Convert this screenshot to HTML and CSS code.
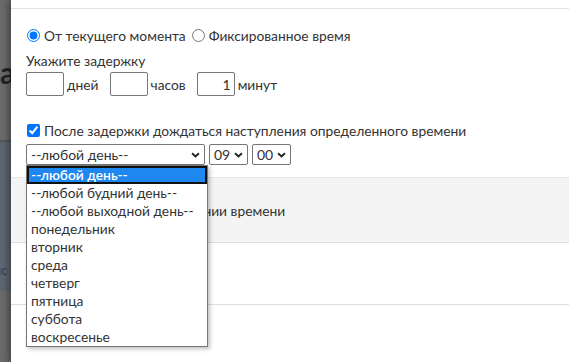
FILE: index.html
```html
<!DOCTYPE html>
<html lang="ru">
<head>
    <meta charset="UTF-8">
    <meta name="viewport" content="width=device-width, initial-scale=1.0">
    <title>Задержка</title>
    <link rel="stylesheet" href="styles.css">
</head>
<body>
    <div class="backdrop">
        <span class="bg-letter">а</span>
        <div class="bg-band"></div>
        <span class="bg-text">пс</span>
    </div>
    <div class="dialog">
        <div class="dialog-head"></div>
        <div class="dialog-body">
            <div class="mode-row">
                <label class="choice"><input type="radio" name="mode" checked> От текущего момента</label>
                <label class="choice"><input type="radio" name="mode"> Фиксированное время</label>
            </div>
            <div class="delay-label">Укажите задержку</div>
            <div class="delay-row">
                <input class="num" type="text" value=""><span class="unit">дней</span>
                <input class="num" type="text" value=""><span class="unit">часов</span>
                <input class="num" type="text" value="1"><span class="unit">минут</span>
            </div>
            <label class="choice wait-row"><input type="checkbox" checked> После задержки дождаться наступления определенного времени</label>
            <div class="time-row">
                <div class="select-wrap day">
                    <select class="select"><option>--любой день--</option></select>
                    <svg class="chevron" viewBox="0 0 10 7"><path d="M1 1.5 L5 5.3 L9 1.5" fill="none" stroke="#222" stroke-width="2.2"/></svg>
                </div>
                <div class="select-wrap small">
                    <select class="select"><option>09</option></select>
                    <svg class="chevron" viewBox="0 0 10 7"><path d="M1 1.5 L5 5.3 L9 1.5" fill="none" stroke="#222" stroke-width="2.2"/></svg>
                </div>
                <div class="select-wrap small">
                    <select class="select"><option>00</option></select>
                    <svg class="chevron" viewBox="0 0 10 7"><path d="M1 1.5 L5 5.3 L9 1.5" fill="none" stroke="#222" stroke-width="2.2"/></svg>
                </div>
                <ul class="dropdown">
                    <li class="active">--любой день--</li>
                    <li>--любой будний день--</li>
                    <li>--любой выходной день--</li>
                    <li>понедельник</li>
                    <li>вторник</li>
                    <li>среда</li>
                    <li>четверг</li>
                    <li>пятница</li>
                    <li>суббота</li>
                    <li>воскресенье</li>
                </ul>
            </div>
        </div>
        <div class="section gray">
            <span class="section-text">Выполнить при наступлении времени</span>
        </div>
        <div class="section"></div>
        <div class="section last"></div>
    </div>
</body>
</html>
```

FILE: styles.css
```css
body {
    margin: 0;
    font-family: Lato, "Noto Sans", sans-serif;
    font-size: 13.8px;
    color: #333;
    background: #666;
    display: flex;
    height: 362px;
    overflow: hidden;
}

.backdrop {
    width: 11px;
    flex-shrink: 0;
    position: relative;
    overflow: hidden;
    background: #6a6a6a;
}

.bg-letter {
    position: absolute;
    left: 0;
    top: 54px;
    font-size: 30px;
    font-weight: bold;
    color: #222;
}

.bg-band {
    position: absolute;
    left: 0;
    top: 140px;
    width: 11px;
    height: 150px;
    background: #5c6570;
    border-top: 1px solid #555;
    box-shadow: 0 25px 0 -24px #4c545e inset, 0 66px 0 -65px #4c545e inset;
}

.bg-text {
    position: absolute;
    left: -6px;
    top: 262px;
    font-size: 13px;
    color: #3a4048;
}

.dialog {
    flex: 1;
    background: #fff;
    box-shadow: -3px 0 6px rgba(0, 0, 0, 0.35);
    position: relative;
}

.dialog-head {
    height: 8px;
    border-bottom: 1px solid #e2e2e2;
}

.dialog-body {
    padding: 17px 0 0 15px;
    height: 151px;
}

.choice {
    display: inline-flex;
    align-items: center;
    gap: 4px;
    margin-right: 5px;
}

.choice input {
    margin: 0 0 0 1px;
    width: 13px;
    height: 13px;
}

.mode-row {
    height: 18px;
    display: flex;
}

.delay-label {
    margin-top: 8px;
    line-height: 18px;
}

.delay-row {
    display: flex;
    align-items: center;
    margin-top: 2px;
}

.num {
    width: 38px;
    height: 24px;
    box-sizing: border-box;
    border: 1px solid #767676;
    border-radius: 2px;
    font-family: inherit;
    font-size: 14px;
    text-align: right;
    padding: 0 3px;
    color: #333;
}

.unit {
    margin: 0 11px 0 3px;
}

.wait-row {
    margin-top: 26px;
    display: flex;
}

.time-row {
    position: relative;
    display: flex;
    gap: 4px;
    margin-top: 5px;
}

.select-wrap {
    position: relative;
    height: 21px;
}

.select-wrap.day {
    width: 179px;
}

.select-wrap.small {
    width: 39px;
}

.select {
    appearance: none;
    width: 100%;
    height: 100%;
    box-sizing: border-box;
    border: 1px solid #767676;
    border-radius: 2px;
    background: #fff;
    font-family: inherit;
    font-size: 14px;
    color: #333;
    padding: 0 0 0 4px;
}

.chevron {
    position: absolute;
    right: 5px;
    top: 8px;
    width: 9px;
    height: 6px;
}

.dropdown {
    position: absolute;
    left: 0;
    top: 21px;
    width: 180px;
    margin: 0;
    padding: 0;
    list-style: none;
    background: #fff;
    border: 1px solid #767676;
    box-shadow: 2px 2px 4px rgba(0, 0, 0, 0.25);
    z-index: 2;
}

.dropdown li {
    height: 18px;
    line-height: 18px;
    padding-left: 4px;
    color: #333;
}

.dropdown li.active {
    background: #1e87f0;
    color: #fff;
    outline: 2px solid #111;
    outline-offset: -2px;
    font-weight: 600;
}

.section {
    height: 61px;
    border-bottom: 1px solid #dedede;
}

.section.gray {
    height: 64px;
    background: #f4f4f4;
    border-top: 1px solid #e6e6e6;
    display: flex;
    align-items: center;
    padding-left: 32px;
}

.section.last {
    height: 60px;
}
```
